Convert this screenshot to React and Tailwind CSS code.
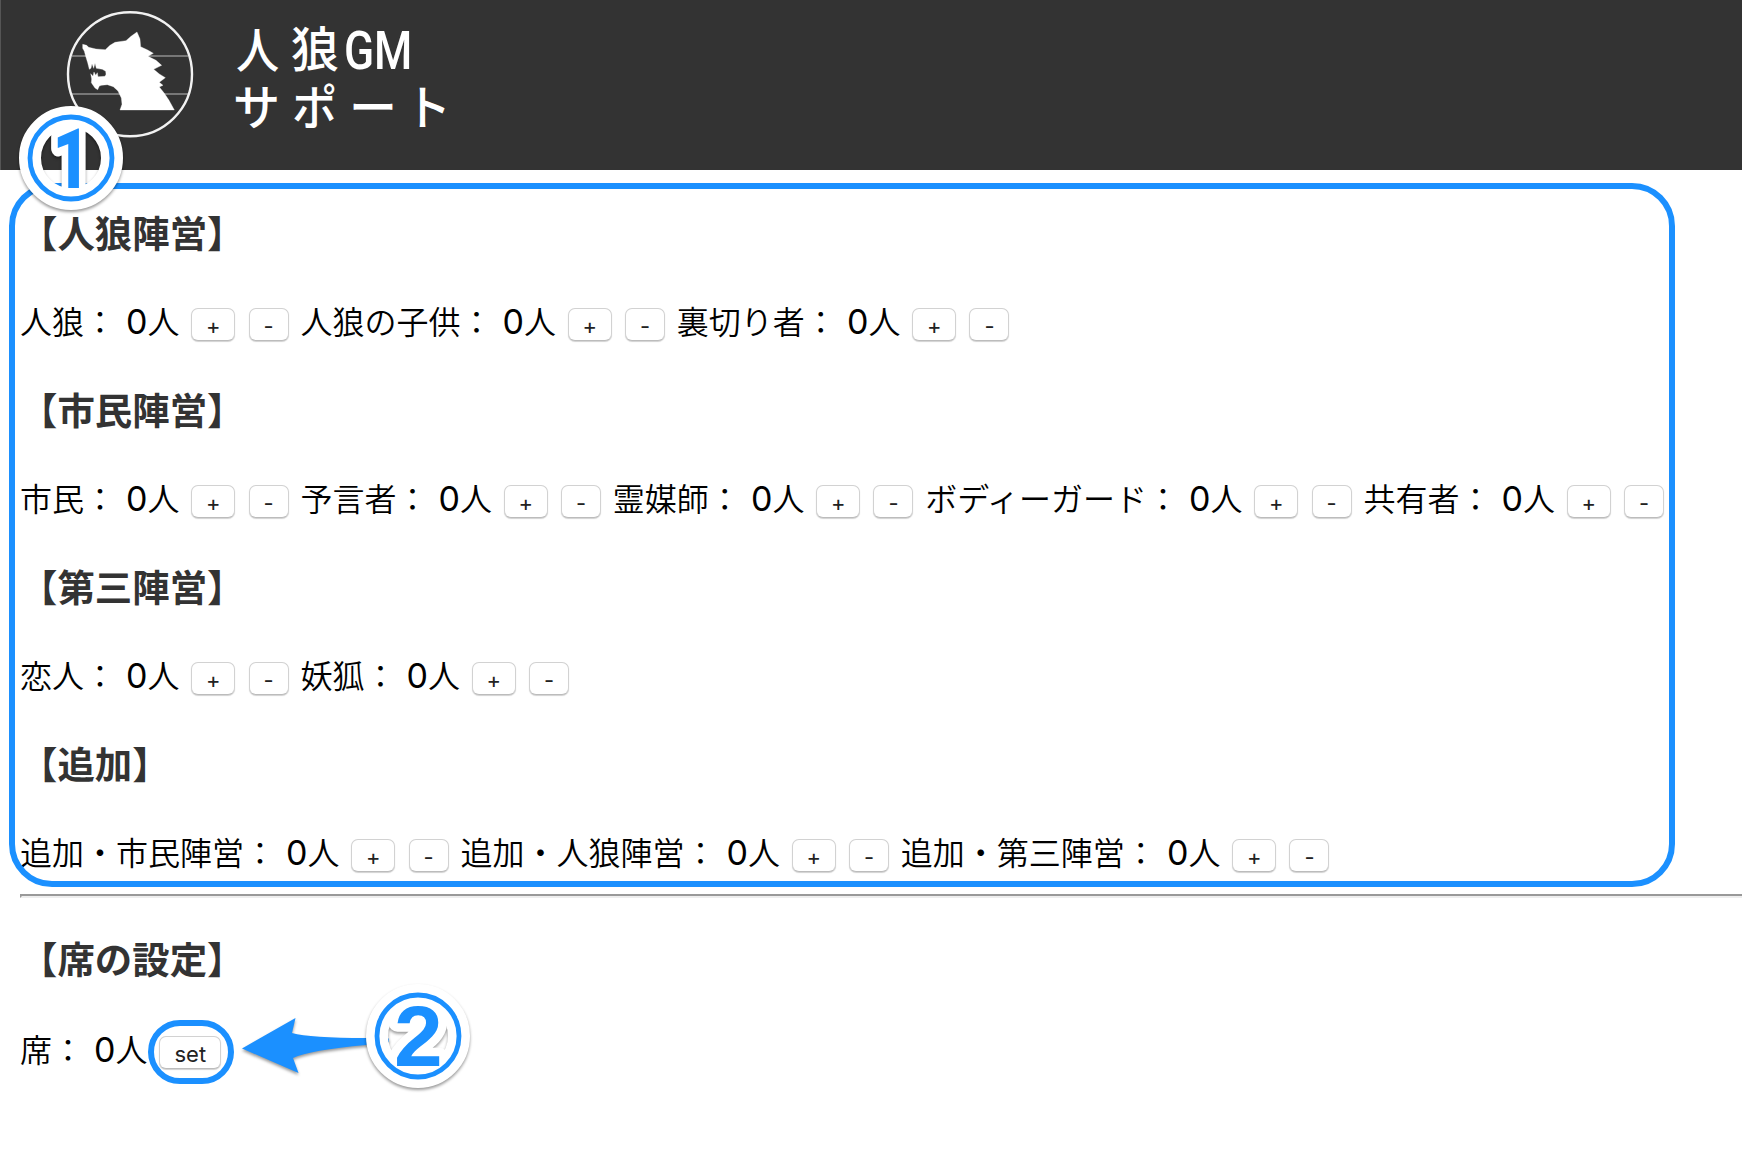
const sections = [
  { title: "【人狼陣営】", roles: ["人狼", "人狼の子供", "裏切り者"] },
  { title: "【市民陣営】", roles: ["市民", "予言者", "霊媒師", "ボディーガード", "共有者"] },
  { title: "【第三陣営】", roles: ["恋人", "妖狐"] },
  { title: "【追加】", roles: ["追加・市民陣営", "追加・人狼陣営", "追加・第三陣営"] },
];

const BLUE = "#1b90ff";

function Logo() {
  return (
    <svg className="block h-[170px] w-[480px]" viewBox="0 0 480 170">
      <g stroke="#777" strokeWidth="2">
        <path d="M72 56H188M72 94H188" />
      </g>
      <circle cx="130" cy="74.3" r="62" fill="none" stroke="#f2f2f2" strokeWidth="2.4" />
      <path
        transform="translate(60 5) scale(.33333)"
        fill="#fff"
        stroke="#fff"
        strokeWidth="1"
        d="M68 118L80 121L86 127L108 132L136 134L150 121L165 112L198 107L213 94L231 81L240 102L242 125L263 135L280 145L264 154L288 166L305 181L281 193L298 207L316 218L298 232L309 241L298 246L313 265L327 286L343 315H180L186 298L184 279L174 258L160 245L142 239L125 241L118 243L113 254L105 249L94 233L95 222L92 206L99 214L102 201L107 211L112 203L114 215L135 214L138 208L137 199L127 193L109 190L105 175L101 190L96 176L93 190L88 193L83 173L77 154L73 139L68 130Z"
      />
      <g fill="#fff" fontFamily="'Noto Sans CJK JP', sans-serif" fontWeight="500">
        <text transform="translate(236 68) scale(.9 1)" fontSize="48">人</text>
        <text x="291" y="67" fontSize="48">狼</text>
        <text transform="translate(344 68.5) scale(.82 1)" fontSize="54" fontFamily="Roboto, sans-serif">G</text>
        <text transform="translate(374 68.5) scale(.81 1)" fontSize="54" fontFamily="Roboto, sans-serif">M</text>
        <text transform="translate(233 125) scale(.98 1)" fontSize="48">サ</text>
        <text transform="translate(292 125) scale(.94 1)" fontSize="48">ポ</text>
        <text x="349" y="125" fontSize="48">ー</text>
        <text transform="translate(405 125) scale(.96 1)" fontSize="48">ト</text>
      </g>
    </svg>
  );
}

function Button({ className, children }) {
  return (
    <button
      className={`flex h-[33.5px] shrink-0 items-center justify-center rounded-[7px] border border-[#d2d2d2] border-b-[#bcbcbc] bg-white pt-[3px] font-['Inter'] text-[22px] leading-none font-normal text-[#222] shadow-[0_1px_1px_rgba(0,0,0,0.18)] ${className}`}
    >
      {children}
    </button>
  );
}

function Count({ label }) {
  return (
    <>
      <span>{label}：</span>
      <span className="flex w-[75.3px] shrink-0 items-baseline pl-[10px]">
        <span className="w-[21.5px] font-['Inter'] text-[34px] leading-none font-normal">0</span>人
      </span>
    </>
  );
}

function Role({ label }) {
  return (
    <div className="mr-[11.8px] flex shrink-0 items-center">
      <Count label={label} />
      <Button className="mt-[9px] mr-[13.3px] w-[44px]">+</Button>
      <Button className="mt-[9px] w-[40px]">-</Button>
    </div>
  );
}

function Title({ children }) {
  return <h3 className="h-[56px] text-[37.44px] leading-[56px] font-bold text-[#333]">{children}</h3>;
}

function Marker({ className, children }) {
  return (
    <svg
      className={`absolute size-[116px] ${className}`}
      viewBox="-58 -58 116 116"
      style={{ filter: "drop-shadow(0 2px 1.5px rgba(0,0,0,.4))" }}
    >
      <circle r="41" fill="none" stroke="#fff" strokeWidth="22" />
      {children}
      <circle r="41" fill="none" stroke={BLUE} strokeWidth="4.8" />
    </svg>
  );
}

export default function App() {
  return (
    <div className="relative h-[1162px] w-[1742px] overflow-hidden bg-white font-['Noto_Sans_CJK_JP',sans-serif] text-[32px] font-[350] text-black">
      <header className="h-[170px] border-l border-[#555] bg-[#333]">
        <div className="-ml-px">
          <Logo />
        </div>
      </header>
      <main className="pt-[34px] pl-[20px]">
        <div className="flex flex-col gap-[33px]">
          {sections.map((s) => (
            <section key={s.title}>
              <Title>{s.title}</Title>
              <div className="mt-[32px] flex h-[56px] items-center leading-[56px] whitespace-nowrap">
                {s.roles.map((r) => (
                  <Role key={r} label={r} />
                ))}
              </div>
            </section>
          ))}
        </div>
        <hr className="mt-[15px] h-[4px] border-t-2 border-b-2 border-l-2 border-t-[#999] border-b-[#eee] border-l-[#999]" />
        <section className="mt-[32px]">
          <Title>【席の設定】</Title>
          <div className="mt-[34px] flex h-[56px] items-center leading-[56px] whitespace-nowrap">
            <Count label="席" />
            <Button className="mt-[9px] w-[62px]">set</Button>
          </div>
        </section>
      </main>

      <div className="pointer-events-none absolute top-[183px] left-[9px] h-[704px] w-[1666px] rounded-[43px] border-[6px] border-[#1b90ff]" />
      <div className="pointer-events-none absolute top-[1020px] left-[148px] h-[64px] w-[86px] rounded-[32px] border-[6px] border-[#1b90ff]" />
      <svg
        className="absolute top-[1008px] left-[232px] h-[76px] w-[170px]"
        viewBox="232 1008 170 76"
        style={{ filter: "drop-shadow(0 2px 1.5px rgba(0,0,0,.4))" }}
      >
        <path
          fill={BLUE}
          d="M242 1048.5L295.5 1018L292 1033Q310 1038 366 1038L389 1038.5V1042L366 1045Q310 1050 293 1058L298.5 1073Z"
        />
      </svg>
      <Marker className="top-[100px] left-[13px]">
        <g
          transform="translate(-18.5 29.5) scale(.78 1)"
          fontFamily="Roboto, sans-serif"
          fontWeight="900"
          fontSize="83"
        >
          <text fill="#fff" stroke="#fff" strokeWidth="17" strokeLinejoin="round">1</text>
          <text fill={BLUE}>1</text>
        </g>
      </Marker>
      <Marker className="top-[977.5px] left-[360px]">
        <g
          transform="translate(-24 29.5) scale(1.03 1)"
          fontFamily="'Liberation Sans', sans-serif"
          fontWeight="700"
          fontSize="85"
        >
          <text fill="#fff" stroke="#fff" strokeWidth="17" strokeLinejoin="round">2</text>
          <text fill={BLUE}>2</text>
        </g>
      </Marker>
    </div>
  );
}
